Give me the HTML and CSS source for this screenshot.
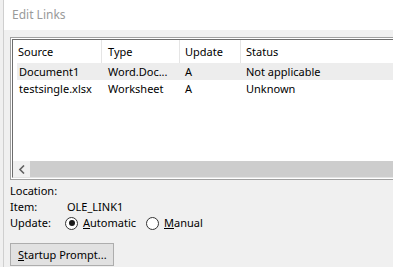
FILE: index.html
```html
<!DOCTYPE html>
<html>
<head>
<meta charset="utf-8">
<link rel="stylesheet" href="styles.css">
</head>
<body>
<div class="win">
  <div class="titlebar">Edit Links</div>
  <div class="content">
    <div class="listframe">
      <div class="listinner">
        <div class="listarea">
          <div class="header">
            <div class="hcell c1">Source</div>
            <div class="hcell c2">Type</div>
            <div class="hcell c3">Update</div>
            <div class="hcell c4">Status</div>
          </div>
          <div class="row sel">
            <div class="cell c1">Document1</div>
            <div class="cell c2">Word.Doc...</div>
            <div class="cell c3">A</div>
            <div class="cell c4">Not applicable</div>
          </div>
          <div class="row">
            <div class="cell c1">testsingle.xlsx</div>
            <div class="cell c2">Worksheet</div>
            <div class="cell c3">A</div>
            <div class="cell c4">Unknown</div>
          </div>
        </div>
        <div class="hscroll">
          <div class="arrow">
            <svg width="8" height="9" viewBox="0 0 8 9"><path d="M6 0.5 L2 4.5 L6 8.5" fill="none" stroke="#606060" stroke-width="1.6"/></svg>
          </div>
          <div class="thumb"></div>
        </div>
      </div>
    </div>
    <div class="info">
      <div class="line"><span class="lbl">Location:</span></div>
      <div class="line"><span class="lbl">Item:</span><span>OLE_LINK1</span></div>
      <div class="line">
        <span class="lbl">Update:</span>
        <span class="radio on"></span><span class="rtext"><u>A</u>utomatic</span>
        <span class="radio"></span><span class="rtext"><u>M</u>anual</span>
      </div>
    </div>
    <div class="btn"><u>S</u>tartup Prompt...</div>
  </div>
</div>
</body>
</html>
```

FILE: styles.css
```css
html, body {
  margin: 0;
  padding: 0;
  background: #f0f0f0;
  overflow: hidden;
  width: 393px;
  height: 267px;
}
body {
  font-family: "Noto Sans", "DejaVu Sans", sans-serif;
  font-size: 11px;
  color: #000;
}
.win {
  margin-left: 3px;
  border-left: 1px solid #cfcfcf;
  height: 267px;
  overflow: hidden;
}
.titlebar {
  height: 30px;
  background: #fff;
  color: #9a9a9a;
  font-size: 12px;
  line-height: 30px;
  padding-left: 8px;
  box-sizing: border-box;
}
.content {
  padding-left: 6px;
  padding-top: 7px;
  overflow: hidden;
}
.listframe {
  width: 390px;
  height: 143px;
  box-sizing: border-box;
  border: 1px solid #a0a0a0;
  border-right: none;
  padding: 1px 0 1px 1px;
  background: #fff;
}
.listinner {
  height: 100%;
  box-sizing: border-box;
  border-top: 1px solid #6d6d6d;
  border-left: 1px solid #6d6d6d;
  border-bottom: 1px solid #e3e3e3;
  display: flex;
  flex-direction: column;
  overflow: hidden;
}
.listarea {
  flex: 1;
  background: #fff;
}
.header {
  display: flex;
  height: 23px;
  align-items: stretch;
}
.hcell {
  box-sizing: border-box;
  line-height: 23px;
  padding-left: 5px;
  border-right: 1px solid #e5e5e5;
  white-space: nowrap;
  flex: none;
}
.hcell.c1 { width: 89px; }
.hcell.c2 { width: 78px; padding-left: 6px; }
.hcell.c3 { width: 61px; }
.hcell.c4 { flex: 1; border-right: none; }
.row {
  display: flex;
  height: 17px;
  line-height: 17px;
  margin-left: 4px;
  white-space: nowrap;
}
.row.sel { background: #ededed; }
.cell { box-sizing: border-box; flex: none; }
.cell.c1 { width: 85px; padding-left: 2px; }
.cell.c2 { width: 78px; padding-left: 6px; }
.cell.c3 { width: 61px; padding-left: 5px; }
.cell.c4 { flex: 1; padding-left: 5px; }
.hscroll {
  height: 16px;
  display: flex;
  background: #f0f0f0;
}
.arrow {
  width: 17px;
  display: flex;
  align-items: center;
  justify-content: center;
}
.thumb {
  flex: 1;
  background: #cdcdcd;
}
.info {
  padding-top: 3px;
}
.line {
  height: 16px;
  line-height: 16px;
  display: flex;
  align-items: center;
  white-space: nowrap;
}
.lbl {
  width: 57px;
}
.radio {
  width: 11px;
  height: 11px;
  border: 1px solid #333;
  border-radius: 50%;
  background: #fff;
  margin-left: -2px;
  margin-right: 5px;
  position: relative;
  box-sizing: content-box;
}
.radio.on::after {
  content: "";
  position: absolute;
  left: 2.5px;
  top: 2.5px;
  width: 6px;
  height: 6px;
  border-radius: 50%;
  background: #1a1a1a;
}
.rtext {
  margin-right: 12px;
}
.btn {
  margin-top: 12px;
  width: 104px;
  height: 23px;
  box-sizing: border-box;
  border: 1px solid #adadad;
  background: #e1e1e1;
  line-height: 21px;
  padding-left: 7px;
  white-space: nowrap;
}
```
